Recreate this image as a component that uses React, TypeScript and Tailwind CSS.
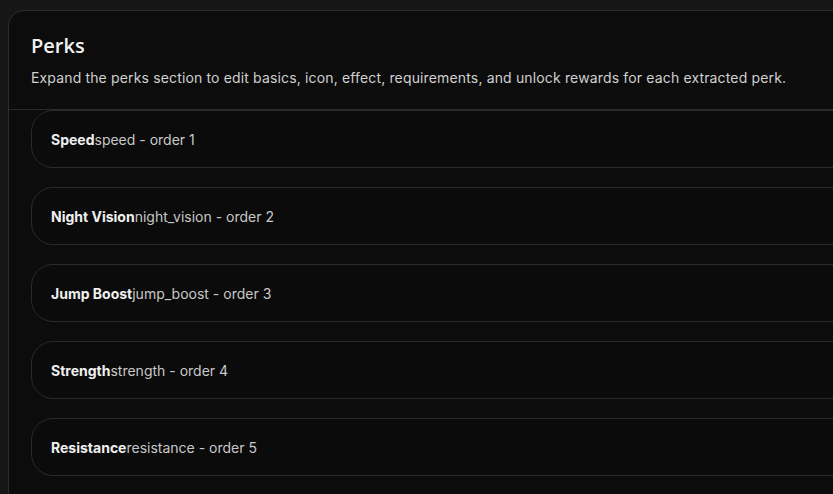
import React from "react";

const perks = [
  { name: "Speed", id: "speed", order: 1 },
  { name: "Night Vision", id: "night_vision", order: 2 },
  { name: "Jump Boost", id: "jump_boost", order: 3 },
  { name: "Strength", id: "strength", order: 4 },
  { name: "Resistance", id: "resistance", order: 5 },
];

export default function App() {
  return (
    <div className="w-[833px] h-[494px] overflow-hidden bg-[#161616] pt-[10px] pl-[8px]">
      <div className="w-[900px] h-[600px] rounded-tl-[16px] border border-[#2c2c2c] bg-[#0c0c0c]">
        <div className="px-[22px] pt-[22px] pb-[22px] border-b border-[#2a2a2a]">
          <h2 className="text-[20px] leading-[26px] font-semibold text-[#f2f2f2] [font-family:'Open_Sans',sans-serif]">Perks</h2>
          <p className="mt-[10px] text-[14px] leading-[18px] tracking-[0.15px] text-[#d0d0d0] [font-family:Inter,sans-serif]">
            Expand the perks section to edit basics, icon, effect, requirements, and unlock rewards for each extracted perk.
          </p>
        </div>
        <div className="flex flex-col gap-[19px] pl-[22px]">
          {perks.map((p) => (
            <div
              key={p.id}
              className="h-[58px] flex items-center rounded-l-[22px] border border-[#2a2a2a] bg-[#0b0b0b] px-[19px] text-[14px] [font-family:Inter,sans-serif]"
            >
              <span className="font-bold text-[#f0f0f0]">{p.name}</span>
              <span className="text-[#c8c8c8]">{p.id} - order {p.order}</span>
            </div>
          ))}
        </div>
      </div>
    </div>
  );
}
